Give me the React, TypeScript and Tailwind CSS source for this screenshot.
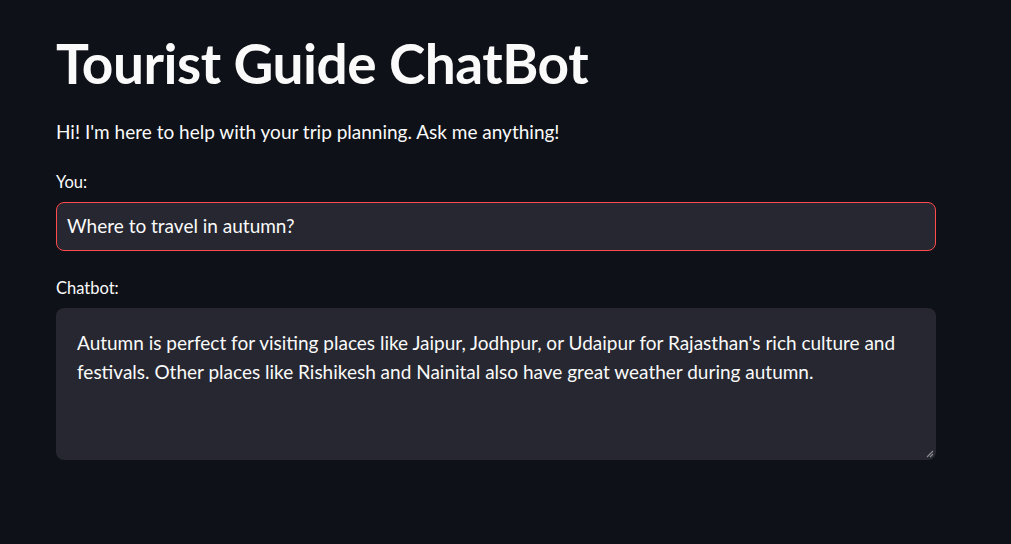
export default function App() {
  return (
    <main
      className="min-h-screen w-full bg-[#0e1117] text-[#fafafa]"
      style={{ fontFamily: '"Lato", "Noto Sans", sans-serif' }}
    >
      <div className="w-[880px] ml-[56px] pt-[30px]">
        {/* Title */}
        <h1 className="text-[55px] font-bold leading-[1.2] tracking-[-0.5px]">
          Tourist Guide ChatBot
        </h1>
        <p className="mt-[22px] text-[19px] leading-[28px]">
          Hi! I'm here to help with your trip planning. Ask me anything!
        </p>

        {/* Question input */}
        <label className="block mt-[25px] text-[16.5px] leading-[22px]">You:</label>
        <div className="mt-[9px] h-[49px] flex items-center rounded-[8px] border border-[#ff4b4b] bg-[#262730] px-[10px]">
          <span className="text-[19px]">Where to travel in autumn?</span>
        </div>

        {/* Answer */}
        <label className="block mt-[26px] text-[16.5px] leading-[22px]">Chatbot:</label>
        <div className="relative mt-[9px] h-[152px] rounded-[8px] bg-[#262730] px-[21px] pt-[20px]">
          <p className="text-[19px] leading-[29px]">
            Autumn is perfect for visiting places like Jaipur, Jodhpur, or Udaipur for Rajasthan's rich culture and festivals. Other places like Rishikesh and Nainital also have great weather during autumn.
          </p>
          <svg
            className="absolute right-[2px] bottom-[2px]"
            width="10"
            height="10"
            viewBox="0 0 10 10"
          >
            <path d="M9 3 L3 9 M9 6 L6 9" stroke="#8a8a8f" strokeWidth="1.2" />
          </svg>
        </div>
      </div>
    </main>
  );
}
